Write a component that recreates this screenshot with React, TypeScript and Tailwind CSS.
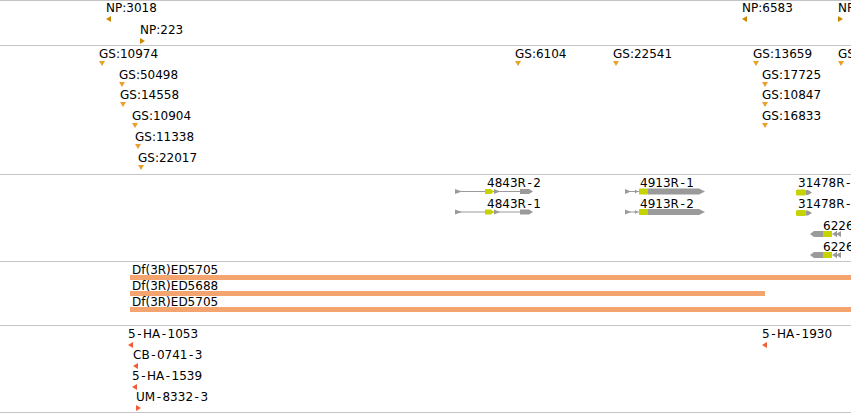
import React from "react";

type Tri = "left" | "right" | "down";
type Mark = { label: string; x: number; y: number; dir: Tri };

// feature coordinates on the browser canvas; y = cap top of the label
const NP: Mark[] = [
  { label: "NP:3018", x: 106, y: 4, dir: "left" },
  { label: "NP:223", x: 140, y: 26, dir: "right" },
  { label: "NP:6583", x: 742, y: 4, dir: "left" },
  { label: "NP:4471", x: 838, y: 4, dir: "right" },
];

const GS: Mark[] = [
  { label: "GS:10974", x: 99, y: 50, dir: "down" },
  { label: "GS:50498", x: 119, y: 71, dir: "down" },
  { label: "GS:14558", x: 120, y: 91, dir: "down" },
  { label: "GS:10904", x: 132, y: 112, dir: "down" },
  { label: "GS:11338", x: 135, y: 133, dir: "down" },
  { label: "GS:22017", x: 138, y: 154, dir: "down" },
  { label: "GS:6104", x: 515, y: 50, dir: "down" },
  { label: "GS:22541", x: 613, y: 50, dir: "down" },
  { label: "GS:13659", x: 753, y: 50, dir: "down" },
  { label: "GS:17725", x: 762, y: 71, dir: "down" },
  { label: "GS:10847", x: 762, y: 91, dir: "down" },
  { label: "GS:16833", x: 762, y: 112, dir: "down" },
  { label: "GS:20193", x: 838, y: 50, dir: "down" },
];

const INS: Mark[] = [
  { label: "5-HA-1053", x: 128, y: 330, dir: "left" },
  { label: "CB-0741-3", x: 133, y: 351, dir: "left" },
  { label: "5-HA-1539", x: 132, y: 372, dir: "left" },
  { label: "UM-8332-3", x: 136, y: 393, dir: "right" },
  { label: "5-HA-1930", x: 762, y: 330, dir: "left" },
];

const TX = [
  { label: "4843R-2", x: 487, y: 179 },
  { label: "4843R-1", x: 487, y: 200 },
  { label: "4913R-1", x: 640, y: 179 },
  { label: "4913R-2", x: 640, y: 200 },
  { label: "31478R-1", x: 798, y: 179 },
  { label: "31478R-2", x: 798, y: 200 },
  { label: "6226R-1", x: 823, y: 222 },
  { label: "6226R-2", x: 823, y: 243 },
];

const DF = [
  { label: "Df(3R)ED5705", y: 266, bar: 275, end: 851 },
  { label: "Df(3R)ED5688", y: 282, bar: 291, end: 765 },
  { label: "Df(3R)ED5705", y: 298, bar: 307, end: 851 },
];

const font = "font-['DejaVu_Sans',sans-serif] text-[12px] leading-[12px] text-black whitespace-nowrap";

// the browser draws hyphens a bit wider than DejaVu does
function Text({ text }: { text: string }) {
  const parts = text.split("-");
  return (
    <>
      {parts.map((p, i) => (
        <React.Fragment key={i}>
          {i > 0 && <span className="mx-[1.5px]">-</span>}
          {p}
        </React.Fragment>
      ))}
    </>
  );
}

function Label({ text, x, y, top }: { text: string; x: number; y: number; top: number }) {
  return (
    <div className={`absolute ${font}`} style={{ left: x, top: y - top - 2 }}>
      <Text text={text} />
    </div>
  );
}

function Arrow({ dir, x, y, color }: { dir: Tri; x: number; y: number; color: string }) {
  const pts =
    dir === "left" ? "5,0 5,6 0,3" : dir === "right" ? "0,0 0,6 5,3" : "0,0 6,0 3,5";
  return (
    <svg className="absolute" width={6} height={6} style={{ left: x, top: y }}>
      <polygon points={pts} fill={color} />
    </svg>
  );
}

function MarkTrack({ marks, top, color, h }: { marks: Mark[]; top: number; color: string; h: string }) {
  return (
    <div className={`relative overflow-hidden border-t border-[#c4c4c4] ${h}`}>
      {marks.map((m, i) => (
        <React.Fragment key={i}>
          <Label text={m.label} x={m.x} y={m.y} top={top} />
          <Arrow dir={m.dir} x={m.x} y={m.y + (m.dir === "down" ? 11 : 12) - top} color={color} />
        </React.Fragment>
      ))}
    </div>
  );
}

const G = "#9a9a9a";
const Y = "#c6d300";

function Models() {
  const rowsA = [191.5, 212];
  const rowsC = [192.5, 213];
  const rowsD = [234, 255];
  return (
    <svg className="absolute left-0 top-[-175px]" width={851} height={261}>
      {rowsA.map((c) => (
        <g key={"a" + c}>
          <line x1={455} x2={521} y1={c} y2={c} stroke={G} strokeWidth={1} />
          <polygon points={`455,${c - 2.5} 462,${c} 455,${c + 2.5}`} fill={G} />
          <polygon points={`485,${c - 2.5} 491,${c - 2.5} 494,${c} 491,${c + 2.5} 485,${c + 2.5}`} fill={Y} />
          <polygon points={`494,${c - 2.5} 500,${c} 494,${c + 2.5}`} fill={G} />
          <polygon points={`520,${c - 2.5} 529,${c - 2.5} 533,${c} 529,${c + 2.5} 520,${c + 2.5}`} fill={G} />
        </g>
      ))}
      {rowsA.map((c) => (
        <g key={"b" + c}>
          <line x1={625} x2={640} y1={c} y2={c} stroke={G} strokeWidth={1} />
          <polygon points={`625,${c - 2.5} 631,${c} 625,${c + 2.5}`} fill={G} />
          <polygon points={`635,${c - 2} 638,${c} 635,${c + 2}`} fill={G} />
          <rect x={639} y={c - 3} width={9} height={6} fill={Y} />
          <polygon points={`648,${c - 3} 699,${c - 3} 705,${c} 699,${c + 3} 648,${c + 3}`} fill={G} />
        </g>
      ))}
      {rowsC.map((c) => (
        <g key={"c" + c}>
          <rect x={796} y={c - 3} width={10} height={6} rx={1.5} fill={Y} />
          <polygon points={`806,${c - 2.5} 808,${c - 2.5} 812,${c} 808,${c + 2.5} 806,${c + 2.5}`} fill={G} />
        </g>
      ))}
      {rowsD.map((c) => (
        <g key={"d" + c}>
          <polygon points={`810,${c} 814,${c - 3} 823,${c - 3} 823,${c + 3} 814,${c + 3}`} fill={G} />
          <rect x={823} y={c - 3} width={9} height={6} fill={Y} />
          <polygon points={`832,${c} 836,${c - 2.5} 836,${c + 2.5}`} fill={G} />
          <line x1={836.5} x2={836.5} y1={c - 3} y2={c + 3} stroke={G} />
          <polygon points={`836,${c} 841,${c - 3} 841,${c + 3}`} fill={G} />
        </g>
      ))}
    </svg>
  );
}

export default function App() {
  return (
    <div className="flex flex-col w-[851px] h-[413px] bg-white overflow-hidden">
      <MarkTrack marks={NP} top={1} color="#cc8800" h="h-[45px]" />
      <MarkTrack marks={GS} top={46} color="#eba02a" h="h-[129px]" />

      {/* transcripts */}
      <div className="relative overflow-hidden border-t border-[#c4c4c4] h-[87px]">
        <Models />
        {TX.map((t, i) => (
          <Label key={i} text={t.label} x={t.x} y={t.y} top={175} />
        ))}
      </div>

      {/* deficiencies */}
      <div className="relative overflow-hidden border-t border-[#c4c4c4] h-[64px]">
        {DF.map((d, i) => (
          <React.Fragment key={i}>
            <Label text={d.label} x={132} y={d.y} top={262} />
            <div
              className="absolute h-[5px] bg-[#f4a46e]"
              style={{ left: 130, top: d.bar - 262, width: d.end - 130 }}
            />
          </React.Fragment>
        ))}
      </div>

      <div className="border-b border-[#c4c4c4]">
        <MarkTrack marks={INS} top={326} color="#f25c36" h="h-[87px]" />
      </div>
    </div>
  );
}
